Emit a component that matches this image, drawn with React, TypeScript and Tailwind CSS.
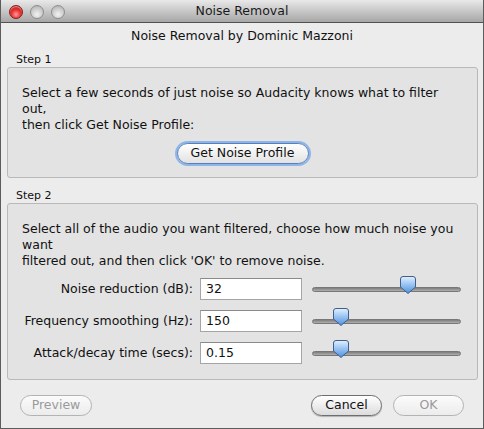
import React from "react";

const font = { fontFamily: '"DejaVu Sans", "Lucida Grande", Verdana, sans-serif' };

function Light({ red }: { red?: boolean }) {
  return (
    <div
      className={
        red
          ? "w-[14px] h-[14px] rounded-full border border-[#8a1a1a] bg-[radial-gradient(circle_at_50%_70%,#ff9a9a_0%,#e83030_45%,#a01010_100%)] shadow-[inset_0_1px_1px_rgba(255,255,255,0.6)]"
          : "w-[14px] h-[14px] rounded-full border border-[#8e8e8e] bg-[radial-gradient(circle_at_50%_70%,#f2f2f2_0%,#cfcfcf_50%,#a9a9a9_100%)]"
      }
    />
  );
}

function Thumb() {
  return (
    <svg width="16" height="18" viewBox="0 0 16 18">
      <defs>
        <linearGradient id="tg" x1="0" y1="0" x2="0" y2="1">
          <stop offset="0" stopColor="#e4f0fd" />
          <stop offset="0.45" stopColor="#9cc6f4" />
          <stop offset="1" stopColor="#4f8fdc" />
        </linearGradient>
      </defs>
      <path
        d="M3 0.5 H13 Q15.5 0.5 15.5 3 V11 L8 17.5 L0.5 11 V3 Q0.5 0.5 3 0.5 Z"
        fill="url(#tg)"
        stroke="#3f5f8f"
        strokeWidth="1"
      />
    </svg>
  );
}

function Slider({ pos }: { pos: number }) {
  return (
    <div className="relative w-[149px] h-[22px] flex items-center">
      <div className="w-full h-[5px] rounded-full bg-gradient-to-b from-[#7d7d7d] to-[#b0b0b0] border border-[#777]" />
      <div className="absolute top-[-2px]" style={{ left: pos }}>
        <Thumb />
      </div>
    </div>
  );
}

function Button({
  children,
  disabled,
  focus,
  w,
}: {
  children: React.ReactNode;
  disabled?: boolean;
  focus?: boolean;
  w: string;
}) {
  const base =
    "h-[21px] rounded-full flex items-center justify-center text-[12.5px] leading-none bg-gradient-to-b ";
  const cls = disabled
    ? "border border-[#b3b3b3] from-[#fbfbfb] to-[#ececec] text-[#9a9a9a]"
    : focus
    ? "border border-[#5a7fb8] from-[#ffffff] to-[#e2e2e2] text-[#111] shadow-[0_0_0_2px_#8cb6ea]"
    : "border border-[#6e6e6e] from-[#ffffff] to-[#dcdcdc] text-[#111] shadow-[0_1px_1px_rgba(0,0,0,0.25)]";
  return <div className={base + cls + " " + w}>{children}</div>;
}

function Row({ label, value, pos }: { label: string; value: string; pos: number }) {
  return (
    <div className="flex items-center h-[22px]">
      <div className="w-[185px] text-right text-[12.5px] text-[#111]">{label}</div>
      <div className="ml-[7px] w-[102px] h-[22px] bg-white border border-[#a5a5a5] border-t-[#8a8a8a] flex items-center pl-[5px] text-[12.5px] text-[#111]">
        {value}
      </div>
      <div className="ml-[10px]">
        <Slider pos={pos} />
      </div>
    </div>
  );
}

export default function App() {
  return (
    <div
      className="w-[484px] h-[429px] bg-[#ececec] border-x border-b border-[#5c5c5c] flex flex-col overflow-hidden"
      style={font}
    >
      <div className="relative h-[23px] shrink-0 bg-gradient-to-b from-[#e9e9e9] to-[#a7a7a7] border-b border-[#515151] flex items-center justify-center">
        <div className="absolute left-[8px] top-[5px] flex gap-[7px]">
          <Light red />
          <Light />
          <Light />
        </div>
        <span className="text-[12.5px] text-[#1a1a1a]">Noise Removal</span>
      </div>

      <div className="mt-[5px] h-[16px] leading-[16px] text-center text-[12.5px] text-[#111]">
        Noise Removal by Dominic Mazzoni
      </div>

      <div className="mt-[9px] h-[14px] leading-[14px] pl-[15px] text-[11px] text-[#111]">Step 1</div>
      <div className="ml-[6px] w-[471px] h-[111px] bg-[#e3e3e3] border border-[#b9b9b9] rounded-[3px] flex flex-col">
        <div className="pt-[17px] pl-[14px] text-[12.5px] leading-[16px] text-[#111]">
          Select a few seconds of just noise so Audacity knows what to filter
          <br />
          out,
          <br />
          then click Get Noise Profile:
        </div>
        <div className="mt-[10px] flex justify-center">
          <Button focus w="w-[132px]">Get Noise Profile</Button>
        </div>
      </div>

      <div className="mt-[11px] h-[14px] leading-[14px] pl-[15px] text-[11px] text-[#111]">Step 2</div>
      <div className="ml-[6px] w-[471px] h-[177px] bg-[#e3e3e3] border border-[#b9b9b9] rounded-[3px] flex flex-col">
        <div className="pt-[17px] pl-[14px] text-[12.5px] leading-[16px] text-[#111]">
          Select all of the audio you want filtered, choose how much noise you
          <br />
          want
          <br />
          filtered out, and then click 'OK' to remove noise.
        </div>
        <div className="mt-[9px] flex flex-col gap-[10px]">
          <Row label="Noise reduction (dB):" value="32" pos={88} />
          <Row label="Frequency smoothing (Hz):" value="150" pos={21} />
          <Row label="Attack/decay time (secs):" value="0.15" pos={21} />
        </div>
      </div>

      <div className="mt-[15px] flex items-center pl-[19px] pr-[19px]">
        <Button disabled w="w-[72px]">Preview</Button>
        <div className="flex-1" />
        <Button w="w-[71px]">Cancel</Button>
        <div className="ml-[11px]">
          <Button disabled w="w-[71px]">OK</Button>
        </div>
      </div>
    </div>
  );
}
